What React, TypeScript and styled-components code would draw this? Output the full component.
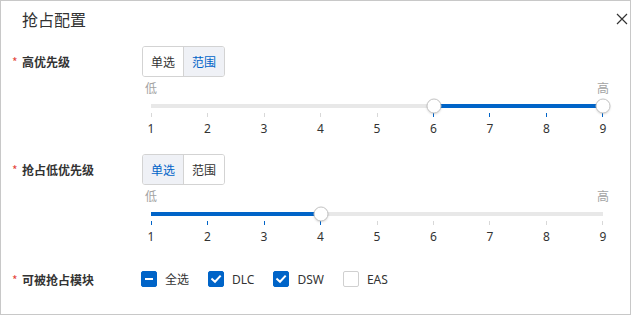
import styled, { createGlobalStyle, css } from "styled-components";

const GlobalStyle = createGlobalStyle`
  html, body {
    margin: 0;
    padding: 0;
    background: #fff;
  }
  body {
    font-family: "Noto Sans", "Noto Sans CJK SC", sans-serif;
    color: #333;
  }
`;

const STEPS = [1, 2, 3, 4, 5, 6, 7, 8, 9];

const Segmented = ({ value }: any) => {
  return (
    <SegGroup>
      <SegButton active={value === "single"}>单选</SegButton>
      <SegButton active={value === "range"}>范围</SegButton>
    </SegGroup>
  );
};

const PrioritySlider = ({ from, to, range }: any) => {
  const pct = (v: number) => ((v - 1) / (STEPS.length - 1)) * 100;
  const start = range ? pct(from) : 0;
  const end = pct(to);

  return (
    <SliderBox>
      <EndLabels>
        <EndLabel>低</EndLabel>
        <EndLabel>高</EndLabel>
      </EndLabels>

      <TrackArea>
        <Rail>
          <Fill style={{ left: `${start}%`, width: `${end - start}%` }} />
          {range && <Thumb style={{ left: `${start}%` }} />}
          <Thumb style={{ left: `${end}%` }} />
        </Rail>
      </TrackArea>

      <Ticks>
        {STEPS.map((s) => (
          <Tick key={`tick-${s}`} active={s >= (range ? from : 1) && s <= to} />
        ))}
      </Ticks>

      <Numbers>
        {STEPS.map((s) => (
          <Num key={`num-${s}`}>{s}</Num>
        ))}
      </Numbers>
    </SliderBox>
  );
};

const Checkbox = ({ state, label }: any) => {
  return (
    <CheckItem>
      <Box state={state}>
        {state === "checked" && (
          <svg width="12" height="12" viewBox="0 0 12 12">
            <path
              d="M2.2 6.2 L5 8.8 L10 3.4"
              fill="none"
              stroke="#fff"
              strokeWidth="2"
              strokeLinecap="square"
            />
          </svg>
        )}
        {state === "partial" && <Dash />}
      </Box>
      <CheckLabel>{label}</CheckLabel>
    </CheckItem>
  );
};

export default function App() {
  return (
    <>
      <GlobalStyle />
      <Dialog>
        <Header>
          <Title>抢占配置</Title>
          <Close>
            <svg width="12" height="12" viewBox="0 0 12 12">
              <path d="M1 1 L11 11 M11 1 L1 11" stroke="#333" strokeWidth="1.2" />
            </svg>
          </Close>
        </Header>

        <Body>
          <Row>
            <Label>
              <Star>*</Star>高优先级
            </Label>
            <Control>
              <Segmented value="range" />
              <PrioritySlider range from={6} to={9} />
            </Control>
          </Row>

          <Row gap={17}>
            <Label>
              <Star>*</Star>抢占低优先级
            </Label>
            <Control>
              <Segmented value="single" />
              <PrioritySlider to={4} />
            </Control>
          </Row>

          <Row gap={24}>
            <Label compact>
              <Star>*</Star>可被抢占模块
            </Label>
            <CheckRow>
              <Checkbox state="partial" label="全选" />
              <Checkbox state="checked" label="DLC" />
              <Checkbox state="checked" label="DSW" />
              <Checkbox state="empty" label="EAS" />
            </CheckRow>
          </Row>
        </Body>
      </Dialog>
    </>
  );
}

const Dialog = styled.div`
  width: 631px;
  height: 315px;
  box-sizing: border-box;
  border: 1px solid #c8c8c8;
  background: #fff;
`;

const Header = styled.div`
  height: 36px;
  display: flex;
  align-items: center;
  justify-content: space-between;
  padding: 0 2px 0 21px;
`;

const Title = styled.div`
  font-size: 16px;
  font-family: "Noto Sans CJK SC", sans-serif;
  color: #333;
  line-height: 20px;
`;

const Close = styled.div`
  width: 12px;
  height: 14px;
  display: flex;
  align-items: center;
  justify-content: center;
`;

const Body = styled.div`
  display: flex;
  flex-direction: column;
  padding: 9px 0 0 10px;
`;

const Row: any = styled.div`
  display: flex;
  align-items: flex-start;
  margin-top: ${(props: any) => props.gap || 0}px;
`;

const Label: any = styled.div`
  width: 131px;
  height: ${(props: any) => (props.compact ? 20 : 31)}px;
  display: flex;
  align-items: center;
  font-size: 12px;
  font-weight: 700;
  font-family: "Noto Sans CJK SC", sans-serif;
  color: #333;
`;

const Star = styled.span`
  color: #e5473d;
  font-weight: 400;
  font-size: 12px;
  width: 10px;
  margin-left: 1px;
`;

const Control = styled.div`
  display: flex;
  flex-direction: column;
`;

const SegGroup = styled.div`
  display: flex;
  align-self: flex-start;
  border: 1px solid #d3d3d3;
  border-radius: 3px;
  overflow: hidden;
`;

const SegButton: any = styled.div`
  width: 40px;
  height: 29px;
  display: flex;
  align-items: center;
  justify-content: center;
  font-size: 12px;
  font-family: "Noto Sans CJK SC", sans-serif;
  color: #333;
  background: #fff;

  & + & {
    border-left: 1px solid #d3d3d3;
  }

  ${(props: any) =>
    props.active &&
    css`
      background: #eff1f6;
      color: #0064c8;
    `}
`;

const SliderBox = styled.div`
  width: 470px;
  margin-top: 4px;
  display: flex;
  flex-direction: column;
`;

const EndLabels = styled.div`
  display: flex;
  justify-content: space-between;
`;

const EndLabel = styled.div`
  width: 18px;
  text-align: center;
  font-size: 12px;
  line-height: 14px;
  color: #a3a3a3;
  font-family: "Noto Sans CJK SC", sans-serif;
`;

const TrackArea = styled.div`
  height: 14px;
  margin-top: 4px;
  padding: 0 9px;
  display: flex;
  align-items: center;
`;

const Rail = styled.div`
  position: relative;
  flex: 1;
  height: 4px;
  background: #e8e8e8;
`;

const Fill = styled.div`
  position: absolute;
  top: 0;
  height: 4px;
  background: #0064c8;
`;

const Thumb = styled.div`
  position: absolute;
  top: 50%;
  width: 15px;
  height: 15px;
  box-sizing: border-box;
  transform: translate(-50%, -50%);
  border-radius: 50%;
  background: #fff;
  border: 1px solid #c4c4c4;
  box-shadow: 0 1px 2px rgba(0, 0, 0, 0.12);
`;

const Ticks = styled.div`
  display: flex;
  justify-content: space-between;
  padding: 0 9px;
`;

const Tick: any = styled.div`
  width: 1px;
  height: 4px;
  background: ${(props: any) => (props.active ? "#0064c8" : "#d8d8d8")};
`;

const Numbers = styled.div`
  display: flex;
  justify-content: space-between;
  margin-top: 4px;
`;

const Num = styled.div`
  width: 18px;
  text-align: center;
  font-size: 12px;
  line-height: 16px;
  color: #333;
  font-family: "Noto Sans", sans-serif;
`;

const CheckRow = styled.div`
  display: flex;
  align-items: center;
  height: 20px;
  gap: 19px;
  margin-left: -1px;
`;

const CheckItem = styled.div`
  display: flex;
  align-items: center;
  gap: 8px;
`;

const Box: any = styled.div`
  width: 16px;
  height: 16px;
  box-sizing: border-box;
  border-radius: 2px;
  display: flex;
  align-items: center;
  justify-content: center;
  background: #0064c8;
  border: 1px solid #0064c8;

  ${(props: any) =>
    props.state === "empty" &&
    css`
      background: #fff;
      border-color: #d0d0d0;
    `}
`;

const Dash = styled.div`
  width: 8px;
  height: 2px;
  background: #fff;
`;

const CheckLabel = styled.span`
  font-size: 12px;
  color: #333;
  font-family: "Noto Sans", "Noto Sans CJK SC", sans-serif;
`;
